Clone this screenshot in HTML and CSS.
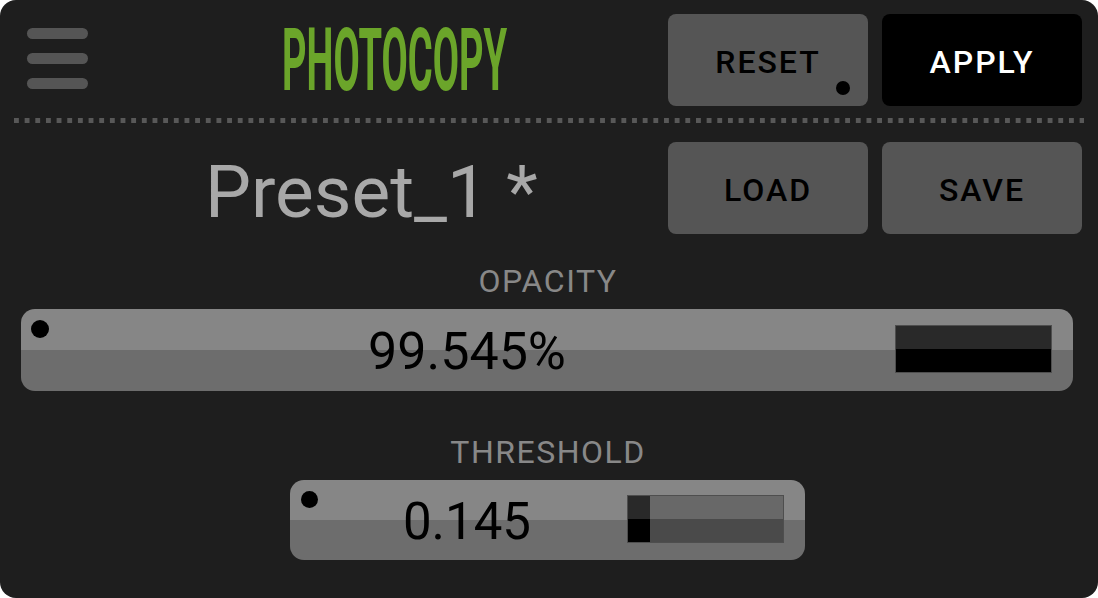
FILE: index.html
```html
<!DOCTYPE html>
<html lang="en">
<head>
    <meta charset="UTF-8">
    <title>Photocopy</title>
    <link rel="stylesheet" href="styles.css">
</head>
<body>
<div class="panel">
    <div class="head">
        <div class="brand">
            <div class="menu">
                <span></span>
                <span></span>
                <span></span>
            </div>
            <h1 class="title">PHOTOCOPY</h1>
        </div>
        <div class="btn reset">RESET<i class="dot"></i></div>
        <div class="btn apply">APPLY</div>
    </div>

    <div class="divider"></div>

    <div class="row">
        <div class="preset">Preset_1 *</div>
        <div class="btn">LOAD</div>
        <div class="btn">SAVE</div>
    </div>

    <div class="param opacity">
        <div class="label">OPACITY</div>
        <div class="bar wide">
            <i class="dot"></i>
            <span class="value">99.545%</span>
            <div class="meter"><div class="fill" style="width: 100%"></div></div>
        </div>
    </div>

    <div class="param threshold">
        <div class="label">THRESHOLD</div>
        <div class="bar narrow">
            <i class="dot"></i>
            <span class="value">0.145</span>
            <div class="meter"><div class="fill" style="width: 14.5%"></div></div>
        </div>
    </div>
</div>
</body>
</html>
```

FILE: styles.css
```css
* {
    margin: 0;
    padding: 0;
    box-sizing: border-box;
}

html, body {
    background: #fff;
}

body {
    font-family: Roboto, "Liberation Sans", sans-serif;
}

.panel {
    width: 1098px;
    height: 598px;
    background: #1e1e1e;
    border-radius: 16px;
    padding: 14px 16px 0 14px;
}

.head, .row {
    display: flex;
    gap: 14px;
    height: 92px;
}

.brand {
    flex: 1;
    min-width: 0;
    display: flex;
    align-items: flex-start;
}

.menu {
    margin: 14px 0 0 13px;
    display: flex;
    flex-direction: column;
    gap: 14px;
}

.menu span {
    display: block;
    width: 61px;
    height: 11px;
    border-radius: 6px;
    background: #555;
}

.title {
    margin: 2px 0 0 194px;
    font-size: 88px;
    line-height: 88px;
    font-weight: 700;
    color: #6ba52a;
    transform: scaleX(0.433);
    transform-origin: left center;
    white-space: nowrap;
}

.btn {
    position: relative;
    flex-shrink: 0;
    width: 200px;
    height: 92px;
    border-radius: 8px;
    background: #555;
    color: #000;
    font-size: 32px;
    font-weight: 500;
    letter-spacing: 2px;
    display: flex;
    align-items: center;
    justify-content: center;
    padding-top: 4px;
}

.btn.apply {
    background: #000;
    color: #fff;
}

.btn .dot {
    position: absolute;
    right: 18px;
    bottom: 11px;
    width: 14px;
    height: 14px;
}

.dot {
    display: block;
    border-radius: 50%;
    background: #000;
}

.divider {
    height: 5px;
    margin: 12px 0 19px;
    background-image: linear-gradient(to right, #585858 5px, transparent 5px);
    background-size: 10.67px 5px;
    width: 1070px;
}

.preset {
    flex: 1;
    font-size: 73px;
    line-height: 1;
    color: #a8a8a8;
    display: flex;
    align-items: center;
    padding: 8px 0 0 191px;
}

.param {
    display: flex;
    flex-direction: column;
    align-items: center;
}

.param.opacity {
    margin-top: 31px;
}

.param.threshold {
    margin-top: 45px;
}

.label {
    font-size: 32px;
    line-height: 32px;
    letter-spacing: 1.5px;
    color: #888;
    margin-bottom: 12px;
}

.bar {
    position: relative;
    display: flex;
    align-items: center;
    border-radius: 14px;
    background: linear-gradient(#868686 50%, #6d6d6d 50%);
    padding: 0 21px 0 18px;
}

.bar.wide {
    width: 1052px;
    height: 82px;
    margin-left: 7px;
    align-self: flex-start;
}

.bar.narrow {
    width: 515px;
    height: 80px;
    margin-left: -2px;
}

.bar .dot {
    position: absolute;
    left: 10px;
    top: 11px;
    width: 18px;
    height: 18px;
}

.bar.narrow .dot {
    left: 11px;
    width: 17px;
    height: 17px;
}

.value {
    flex: 1;
    text-align: center;
    font-size: 52px;
    color: #000;
    padding-top: 3px;
}

.bar.narrow .value {
    font-size: 51px;
}

.meter {
    width: 157px;
    height: 48px;
    background: linear-gradient(#686868 50%, #4a4a4a 50%);
    border: 1px solid #4e4e4e;
    margin-top: -2px;
}

.fill {
    height: 100%;
    background: linear-gradient(#292929 50%, #000 50%);
}
```
